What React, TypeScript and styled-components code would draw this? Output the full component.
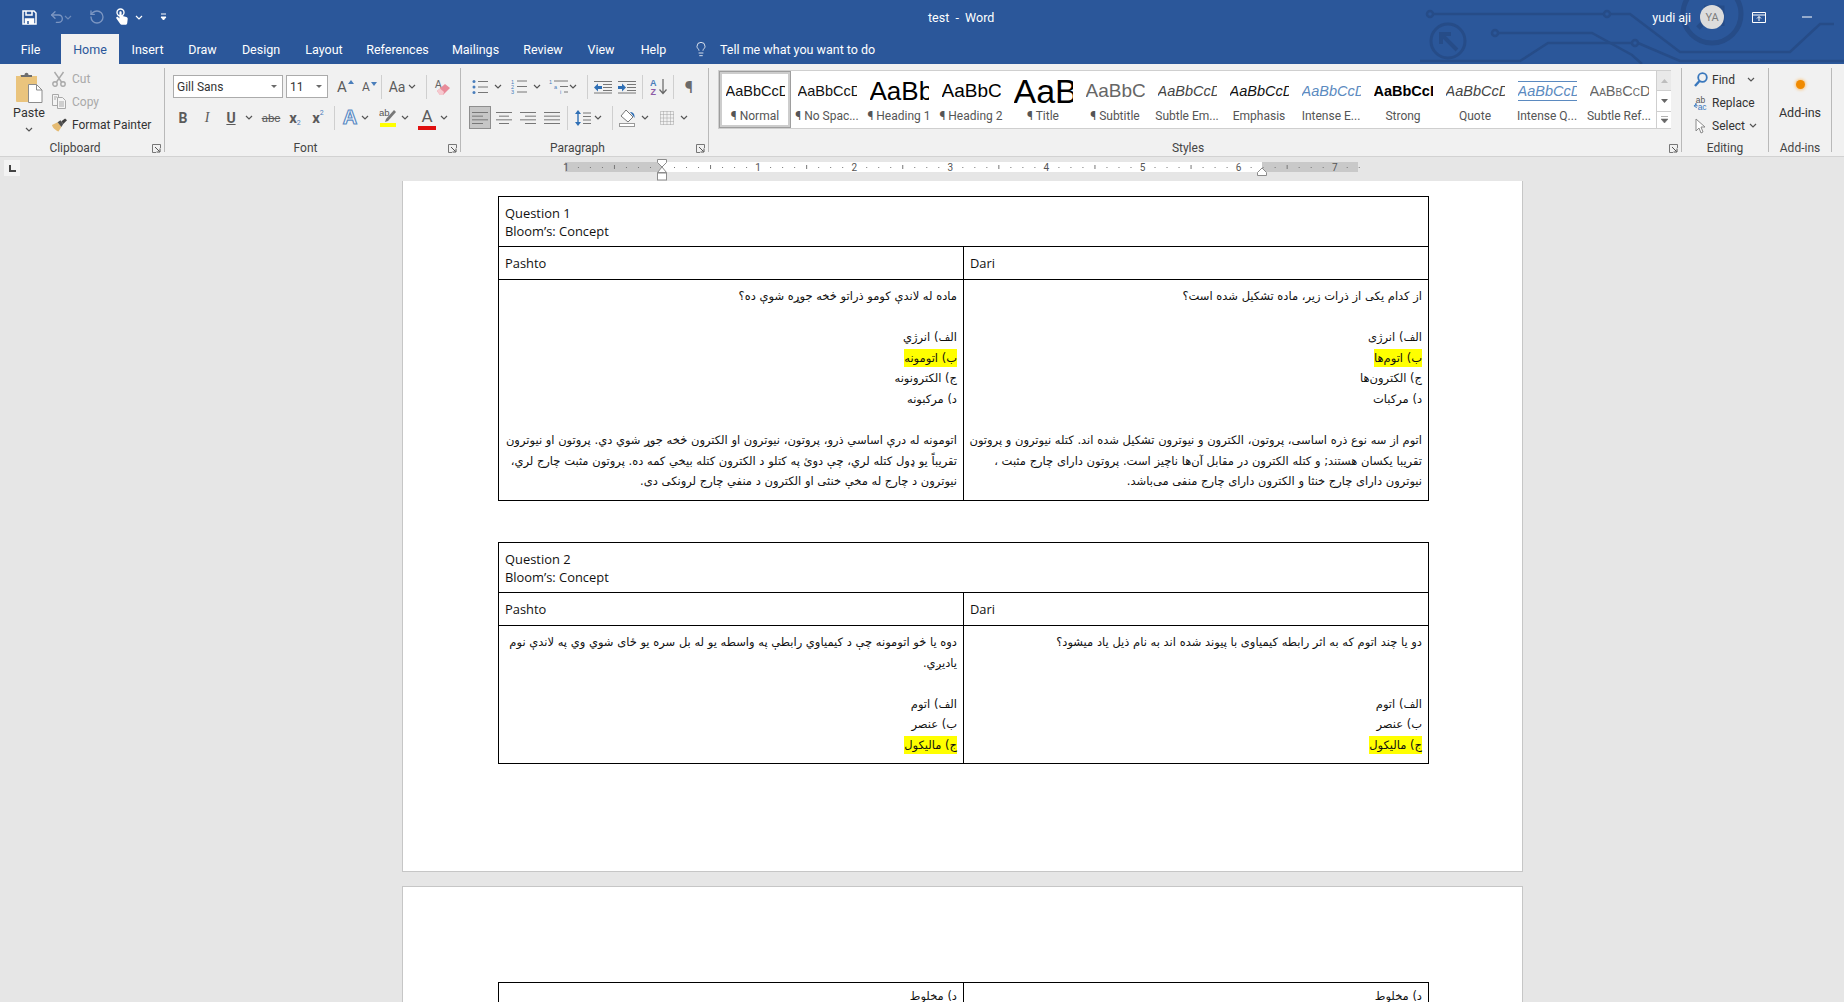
import React from "react";
import styled, { createGlobalStyle } from "styled-components";
import { Lightbulb, RotateCcw, Undo2 } from "lucide-react";

const GlobalStyle = createGlobalStyle`
  html, body { margin: 0; padding: 0; height: 100%; overflow: hidden; background: #e6e6e6; }
  body { font-family: Roboto, "Liberation Sans", sans-serif; font-size: 12px; color: #333; }
`;

const Window = styled.div`
  width: 1844px;
  height: 1002px;
  display: flex;
  flex-direction: column;
  overflow: hidden;
`;

/* ---------- blue header ---------- */
const Header = styled.header`
  position: relative;
  height: 64px;
  flex: none;
  background: #2b579a;
  color: #fff;
  overflow: hidden;
`;

const Circuit = styled.svg`
  position: absolute;
  left: 1420px;
  top: 0;
`;

const TitleRow = styled.div`
  position: relative;
  height: 34px;
  display: flex;
  align-items: center;
`;

const TitleText = styled.span<{ $ml: number }>`
  margin-left: ${(p) => p.$ml}px;
  font-size: 12.5px;
  white-space: pre;
`;

const Avatar = styled.div`
  width: 24px;
  height: 24px;
  margin-left: 9px;
  border-radius: 50%;
  background: #dcdcdc;
  color: #7d7d7d;
  font-size: 11px;
  display: flex;
  align-items: center;
  justify-content: center;
`;

const Tabs = styled.nav`
  position: relative;
  height: 30px;
  display: flex;
`;

const Tab = styled.div<{ $w: number; $active?: boolean }>`
  width: ${(p) => p.$w}px;
  display: flex;
  align-items: center;
  justify-content: center;
  font-size: 12.5px;
  background: ${(p) => (p.$active ? "#f1f1f1" : "transparent")};
  color: ${(p) => (p.$active ? "#2b579a" : "#fff")};
`;

const TellMe = styled.div`
  margin-left: 13px;
  display: flex;
  align-items: center;
  gap: 11px;
  font-size: 12.5px;
`;

/* ---------- ribbon ---------- */
const Ribbon = styled.section`
  height: 92px;
  flex: none;
  display: flex;
  background: #f1f1f1;
  border-bottom: 1px solid #d2d2d2;
  box-sizing: content-box;
`;

const Group = styled.div<{ $w: number }>`
  position: relative;
  width: ${(p) => p.$w}px;
  height: 84px;
  margin-top: 4px;
  flex: none;
  display: flex;
  flex-direction: column;
  box-sizing: border-box;
  border-right: 1px solid #b9b9b9;
`;

const GroupBody = styled.div`
  flex: 1;
  min-height: 0;
  display: flex;
`;

const GroupLabel = styled.div<{ $launcher?: boolean }>`
  position: relative;
  height: 16px;
  margin-bottom: -4px;
  padding-right: ${(p) => (p.$launcher ? 14 : 0)}px;
  text-align: center;
  font-size: 12px;
  line-height: 16px;
  color: #444;
`;

const Launcher = styled.svg`
  position: absolute;
  right: 3px;
  top: 4px;
`;

const ToolStack = styled.div`
  padding-top: 3px;
  display: flex;
  flex-direction: column;
`;

const ToolRow = styled.div`
  height: 31px;
  display: flex;
  align-items: center;
`;

const Tool = styled.div<{ $ml: number; $w: number; $size?: number; $weight?: number; $color?: string; $italic?: boolean; $serif?: boolean }>`
  position: relative;
  flex: none;
  margin-left: ${(p) => p.$ml}px;
  width: ${(p) => p.$w}px;
  display: flex;
  align-items: center;
  justify-content: center;
  font-size: ${(p) => p.$size ?? 13}px;
  font-weight: ${(p) => p.$weight ?? 400};
  font-style: ${(p) => (p.$italic ? "italic" : "normal")};
  font-family: ${(p) => (p.$serif ? '"Liberation Serif", serif' : "inherit")};
  color: ${(p) => p.$color ?? "#5b5b5b"};
`;

const ToolSep = styled.div<{ $ml: number }>`
  flex: none;
  margin-left: ${(p) => p.$ml}px;
  width: 1px;
  height: 24px;
  background: #cfcfcf;
`;

const Select = styled.div<{ $ml: number; $w: number }>`
  flex: none;
  margin-left: ${(p) => p.$ml}px;
  width: ${(p) => p.$w}px;
  height: 23px;
  box-sizing: border-box;
  padding: 0 3px;
  display: flex;
  align-items: center;
  justify-content: space-between;
  background: #fff;
  border: 1px solid #ababab;
  font-size: 12px;
  color: #333;
`;

const SelectCaret = styled.span`
  width: 0;
  height: 0;
  margin-right: 2px;
  border-left: 3px solid transparent;
  border-right: 3px solid transparent;
  border-top: 3px solid #6a6a6a;
`;

const ActiveAlign = styled.div<{ $ml: number }>`
  flex: none;
  margin-left: ${(p) => p.$ml}px;
  width: 22px;
  height: 23px;
  box-sizing: border-box;
  border: 1px solid #8e8e8e;
  background: #c6c6c6;
  display: flex;
  align-items: center;
  justify-content: center;
`;

const ColorBar = styled.span<{ $color: string }>`
  position: absolute;
  left: 0;
  right: 0;
  bottom: -1px;
  height: 4px;
  background: ${(p) => p.$color};
`;

const UnderA = styled.span`
  position: relative;
  display: block;
  width: 100%;
  height: 22px;
  text-align: center;
  line-height: 18px;
`;

const OutlineA = styled.span`
  font-family: "Liberation Sans", sans-serif;
  font-size: 20px;
  font-weight: 700;
  color: #fff;
  -webkit-text-stroke: 1.2px #5d8cc4;
`;

const SubScript = styled.span<{ $up?: boolean }>`
  font-size: 7px;
  font-weight: 400;
  color: #4a7ebb;
  align-self: ${(p) => (p.$up ? "flex-start" : "flex-end")};
`;

/* clipboard */
const PasteBlock = styled.div`
  width: 58px;
  margin-right: -7px;
  flex: none;
  display: flex;
  flex-direction: column;
  align-items: center;
  padding-top: 4px;
  font-size: 12.5px;
  color: #333;
`;

const PasteLabel = styled.div`
  margin-top: 2px;
`;

const PasteChev = styled.div`
  margin-top: 7px;
  line-height: 0;
`;

const SmallStack = styled.div`
  margin-top: -1px;
  display: flex;
  flex-direction: column;
`;

const SmallRow = styled.div<{ $disabled?: boolean }>`
  height: 23px;
  display: flex;
  align-items: center;
  gap: 5px;
  font-size: 12px;
  white-space: nowrap;
  color: ${(p) => (p.$disabled ? "#a9a9a9" : "#333")};
`;

const SmallIcon = styled.div`
  width: 16px;
  display: flex;
  justify-content: center;
  flex: none;
`;

/* styles gallery */
const Gallery = styled.div`
  margin: 2px 0 0 9px;
  width: 953px;
  height: 59px;
  box-sizing: border-box;
  display: flex;
  background: #fff;
  border: 1px solid #cfcfcf;
`;

const StyleItem = styled.div<{ $selected?: boolean }>`
  width: 72px;
  flex: none;
  box-sizing: border-box;
  padding-top: 2px;
  display: flex;
  flex-direction: column;
  align-items: center;
  overflow: hidden;
  border: ${(p) => (p.$selected ? "1px solid #9e9e9e" : "1px solid transparent")};
  box-shadow: ${(p) => (p.$selected ? "inset 0 0 0 2px #cdcdcd" : "none")};
`;

const StylePreview = styled.div<{ $size: number; $color: string; $italic?: boolean; $bold?: boolean; $lines?: boolean; $caps?: boolean }>`
  width: 59px;
  height: 34px;
  flex: none;
  overflow: hidden;
  display: flex;
  align-items: center;
  white-space: nowrap;
  font-family: "Liberation Sans", sans-serif;
  font-size: ${(p) => p.$size}px;
  color: ${(p) => p.$color};
  font-style: ${(p) => (p.$italic ? "italic" : "normal")};
  font-weight: ${(p) => (p.$bold ? 700 : 400)};
  font-variant: ${(p) => (p.$caps ? "small-caps" : "normal")};
  justify-content: flex-start;
  & > span {
    line-height: 18px;
    border-top: ${(p) => (p.$lines ? "1px solid #5b8ac0" : "none")};
    border-bottom: ${(p) => (p.$lines ? "1px solid #5b8ac0" : "none")};
  }
`;

const StyleName = styled.div`
  font-size: 12px;
  line-height: 16px;
  color: #555;
  white-space: nowrap;
`;

const GalleryScroll = styled.div`
  margin-left: 1px;
  width: 14px;
  flex: none;
  display: flex;
  flex-direction: column;
  border-left: 1px solid #cfcfcf;
`;

const ScrollButton = styled.div<{ $h: number; $off?: boolean }>`
  height: ${(p) => p.$h}px;
  display: flex;
  align-items: center;
  justify-content: center;
  background: ${(p) => (p.$off ? "#e9e9e9" : "#fff")};
  border-bottom: 1px solid #cfcfcf;
  &:last-child { border-bottom: none; }
`;

const EditStack = styled.div`
  padding: 0 0 0 11px;
  display: flex;
  flex-direction: column;
`;

const EditRow = styled.div`
  height: 23px;
  display: flex;
  align-items: center;
  gap: 4px;
  font-size: 12px;
  color: #333;
`;

const EditIcon = styled.div`
  width: 15px;
  display: flex;
  justify-content: center;
`;

const EditChev = styled.div<{ $ml: number }>`
  margin-left: ${(p) => p.$ml}px;
  line-height: 0;
`;

const AddIn = styled.div`
  flex: 1;
  display: flex;
  flex-direction: column;
  align-items: center;
  padding-top: 12px;
  font-size: 12.5px;
  color: #333;
`;

const AddInDot = styled.div`
  width: 9px;
  height: 9px;
  border-radius: 50%;
  background: #f08a00;
  box-shadow: 0 0 3px 1px #f9c784;
  margin-bottom: 16px;
`;

/* ---------- ruler ---------- */
const RulerBar = styled.div`
  height: 24px;
  flex: none;
  display: flex;
  background: #e6e6e6;
`;

const TabStopBox = styled.div`
  margin: 3px 0 0 4px;
  width: 16px;
  height: 16px;
  background: #f3f3f3;
  display: flex;
  align-items: center;
  justify-content: center;
`;

const RulerSvg = styled.svg`
  margin-left: 545px;
  overflow: visible;
`;

/* ---------- document ---------- */
const DocArea = styled.main`
  flex: 1;
  min-height: 0;
  overflow: hidden;
  padding-left: 402px;
  background: #e6e6e6;
`;

const Page = styled.div<{ $top: number; $first?: boolean }>`
  width: 1121px;
  box-sizing: border-box;
  padding: ${(p) => p.$top}px 95px 0;
  background: #fff;
  border: 1px solid #c6c6c6;
  border-top: ${(p) => (p.$first ? "none" : "1px solid #c6c6c6")};
  height: ${(p) => (p.$first ? "691px" : "auto")};
  margin-bottom: 14px;
`;

const QuestionTable = styled.table<{ $mb?: number }>`
  width: 931px;
  table-layout: fixed;
  border-collapse: collapse;
  margin-bottom: ${(p) => p.$mb ?? 0}px;
  font-family: "Open Sans", "Noto Sans", sans-serif;
  font-size: 12.9px;
  color: #111;
  td {
    border: 1px solid #000;
    padding: 0 6px;
    vertical-align: top;
  }
`;

const HeadCell = styled.td`
  line-height: 18px;
  && { padding-top: 7px; padding-bottom: 6px; }
`;

const LangCell = styled.td`
  line-height: 18px;
  && { padding-top: 7px; padding-bottom: 7px; }
`;

const BodyCell = styled.td<{ $pb?: number }>`
  && { padding-top: 6px; padding-bottom: ${(p) => p.$pb ?? 8}px; }
  direction: rtl;
  text-align: right;
  font-family: "DejaVu Sans", sans-serif;
  font-size: 11.5px;
`;

const Line = styled.div`
  height: 20.6px;
  line-height: 20.6px;
  white-space: nowrap;
`;

const Mark = styled.span`
  background: #ffff00;
  padding: 2px 0;
`;

/* ---------- icons ---------- */
const Chev = ({ color = "#555" }: { color?: string }) => (
  <svg width="8" height="5" viewBox="0 0 8 5" fill="none">
    <path d="M1 1l3 3 3-3" stroke={color} strokeWidth="1.2" />
  </svg>
);

const LauncherIcon = () => (
  <Launcher width="9" height="9" viewBox="0 0 9 9" fill="none">
    <path d="M8.5 4V.5H.5v8H4" stroke="#777" />
    <path d="M3 3l4.5 4.5M8 4.5V8H4.5" stroke="#555" />
  </Launcher>
);

const Lines = ({ rows, w = 16, color = "#777" }: { rows: [number, number][]; w?: number; color?: string }) => (
  <svg width={w} height="14" viewBox={`0 0 ${w} 14`} fill="none" stroke={color}>
    {rows.map(([x, len], i) => (
      <path key={i} d={`M${x} ${1.5 + i * (rows.length > 1 ? 11 / (rows.length - 1) : 0)}h${len}`} />
    ))}
  </svg>
);

const SaveIcon = () => (
  <svg width="15" height="15" viewBox="0 0 15 15" fill="none" stroke="#fff" strokeWidth="1.5">
    <path d="M1 1h11l2 2v11H1z" />
    <path d="M4 1v4h6V1" />
    <path d="M3.5 14V9h8v5" fill="#fff" />
    <path d="M6 11v3" stroke="#2b579a" />
  </svg>
);

const TouchIcon = () => (
  <svg width="14" height="18" viewBox="0 0 14 18" fill="none">
    <circle cx="5.5" cy="4.5" r="3.5" stroke="#fff" strokeWidth="1.4" />
    <path d="M4.4 4.2c0-1.4 2.2-1.4 2.2 0v3.6l4.7 1.1c1 .3 1.5 1 1.4 2l-.5 4.3c-.1.8-.8 1.5-1.6 1.5H6.7c-.6 0-1.1-.3-1.4-.8L1.4 10.600c-.7-1.200.8-2.400 1.800-1.400l1.200 1.200z" fill="#fff" />
  </svg>
);

const PasteIcon = () => (
  <svg width="29" height="31" viewBox="0 0 29 31" fill="none">
    <path d="M1 4h4v-1h12v1h5v26H2a1 1 0 0 1-1-1z" fill="#eac47d" />
    <path d="M6 5V3h3.500c0-3 4-3 4 0H17v2z" fill="#6e6e6e" />
    <path d="M13.500 12.500h8l5.500 5.500v12.500H13.500z" fill="#fff" stroke="#8c8c8c" />
    <path d="M21.500 12.500V18H27" stroke="#8c8c8c" />
  </svg>
);

const CutIcon = () => (
  <svg width="14" height="16" viewBox="0 0 14 16" fill="none" stroke="#a9a9a9" strokeWidth="1.400">
    <path d="M2.500 1l7 10M11.500 1l-7 10" />
    <circle cx="3" cy="13" r="2.200" />
    <circle cx="11" cy="13" r="2.200" />
  </svg>
);

const CopyIcon = () => (
  <svg width="14" height="15" viewBox="0 0 14 15" fill="#f4f4f4" stroke="#a9a9a9">
    <path d="M.5.500h6v11h-6z" />
    <path d="M5.500 3.500h5l3 3v8h-8z" />
    <path d="M2 3h3M2 5h2M7 8h5M7 10h5M7 12h5" />
  </svg>
);

const PainterIcon = () => (
  <svg width="17" height="14" viewBox="0 0 17 14" fill="none">
    <path d="M1 7l6-3 4 5-3 5C6 13 2 11 1 7z" fill="#e5bb72" />
    <path d="M7 4l3-2 3 4-2 3z" fill="#505050" />
    <path d="M11 3l4-3 2 2-4 4z" fill="#404040" />
  </svg>
);

const GrowIcon = ({ up }: { up: boolean }) => (
  <svg width="6" height="4" viewBox="0 0 6 4" style={{ position: "absolute", right: -3, top: 2 }}>
    <path d={up ? "M3 0l3 4H0z" : "M3 4L0 0h6z"} fill="#4a7ebb" />
  </svg>
);

const EraserIcon = () => (
  <svg width="18" height="18" viewBox="0 0 18 18" fill="none">
    <text x="1" y="10" fontFamily="Liberation Sans" fontSize="10" fill="#666">A</text>
    <path d="M3 13l8-7 5 4-7 7H6z" fill="#e88b9a" />
    <path d="M3 13l3-2.500 4 3.500-1 3H6z" fill="#f6c9cf" />
  </svg>
);

const HighlightIcon = () => (
  <svg width="18" height="22" viewBox="0 0 18 22" fill="none">
    <text x="0" y="9" fontFamily="Liberation Sans" fontSize="9.500" fill="#555">ab</text>
    <path d="M7 12l8-9 2 2-8 9-3 1z" fill="#777" />
    <rect x="1" y="16" width="16" height="4" fill="#ffff00" />
  </svg>
);

const BulletsIcon = () => (
  <svg width="16" height="14" viewBox="0 0 16 14" fill="none">
    {[1.5, 7, 12.500].map((y) => <circle key={y} cx="2" cy={y} r="1.500" fill="#4a7ebb" />)}
    <path d="M6 1.500h10M6 7h10M6 12.500h10" stroke="#777" />
  </svg>
);

const NumberingIcon = () => (
  <svg width="16" height="15" viewBox="0 0 16 15" fill="none">
    {["1", "2", "3"].map((n, i) => (
      <text key={n} x="0" y={4.500 + i * 5} fontFamily="Liberation Sans" fontSize="5.500" fill="#4a7ebb">{n}</text>
    ))}
    <path d="M6 2h10M6 7.500h10M6 13h10" stroke="#777" />
  </svg>
);

const MultilevelIcon = () => (
  <svg width="20" height="15" viewBox="0 0 20 15" fill="none">
    <text x="0" y="5" fontFamily="Liberation Sans" fontSize="5.500" fill="#4a7ebb">1</text>
    <text x="5" y="10" fontFamily="Liberation Sans" fontSize="5.500" fill="#4a7ebb">a</text>
    <text x="11" y="15" fontFamily="Liberation Sans" fontSize="5.500" fill="#4a7ebb">i</text>
    <path d="M5 2h14M11 7.500h8M15 13h4" stroke="#777" />
  </svg>
);

const IndentIcon = ({ flip }: { flip?: boolean }) => (
  <svg width="18" height="14" viewBox="0 0 18 14" fill="none">
    <path d="M0 1.500h18M9 4.500h9M9 7.500h9M9 10.500h9M0 13h18" stroke="#777" />
    <path d={flip ? "M0 6h4V3.500L8 7.500l-4 4V9H0z" : "M8 6H4V3.500l-4 4 4 4V9h4z"} fill="#2f6fb5" />
  </svg>
);

const SortIcon = () => (
  <svg width="18" height="17" viewBox="0 0 18 17" fill="none">
    <text x="0" y="7.500" fontFamily="Liberation Sans" fontSize="9" fontWeight="700" fill="#4a7ebb">A</text>
    <text x="0.500" y="16.500" fontFamily="Liberation Sans" fontSize="9" fontWeight="700" fill="#8e5ba6">Z</text>
    <path d="M13 1v14M9.500 11.500l3.500 4 3.500-4" stroke="#666" strokeWidth="1.200" />
  </svg>
);

const LineSpacingIcon = () => (
  <svg width="16" height="16" viewBox="0 0 16 16" fill="none">
    <path d="M3 3v10" stroke="#2f6fb5" strokeWidth="1.400" />
    <path d="M3 0l3 4H0zM3 16L0 12h6z" fill="#2f6fb5" />
    <path d="M8 3h8M8 6.500h8M8 10h8M8 13.500h8" stroke="#777" />
  </svg>
);

const ShadingIcon = () => (
  <svg width="18" height="18" viewBox="0 0 18 18" fill="none">
    <path d="M7 1l7 7-5 5-7-6z" fill="#fff" stroke="#777" />
    <path d="M11 3c3 0 5 2 4.500 6l-2-3z" fill="#2f6fb5" />
    <rect x="0.500" y="14.500" width="15" height="3" fill="#fff" stroke="#999" />
  </svg>
);

const BordersIcon = () => (
  <svg width="14" height="14" viewBox="0 0 14 14" fill="none" stroke="#a3a3a3" strokeDasharray="1 1">
    <path d="M.5.500h13v13H.5zM7 .5v13M.5 7h13M3.500.5v13M10.500.5v13M.5 3.500h13M.5 10.500h13" />
  </svg>
);

const FindIcon = () => (
  <svg width="14" height="15" viewBox="0 0 14 15" fill="none" stroke="#3a78bd">
    <circle cx="8.500" cy="5.500" r="4.300" strokeWidth="1.800" />
    <path d="M5.500 9L1 14" strokeWidth="2.400" />
  </svg>
);

const ReplaceIcon = () => (
  <svg width="16" height="16" viewBox="0 0 16 16" fill="none">
    <text x="3" y="7.500" fontFamily="Liberation Sans" fontSize="9" fill="#555">ab</text>
    <text x="5" y="15.500" fontFamily="Liberation Sans" fontSize="9" fill="#3a78bd">ac</text>
    <path d="M3 8v3h2M4 13l-3-2 3-2" stroke="#3a78bd" />
  </svg>
);

const SelectIcon = () => (
  <svg width="11" height="16" viewBox="0 0 11 16" fill="#fdfdfd" stroke="#8a8a8a">
    <path d="M1 1v12l3-3 2 5 2-1-2-5h4z" />
  </svg>
);

/* ---------- data ---------- */
const tabs = [
  { label: "File", w: 61 },
  { label: "Home", w: 58, active: true },
  { label: "Insert", w: 57 },
  { label: "Draw", w: 53 },
  { label: "Design", w: 64 },
  { label: "Layout", w: 62 },
  { label: "References", w: 85 },
  { label: "Mailings", w: 71 },
  { label: "Review", w: 64 },
  { label: "View", w: 52 },
  { label: "Help", w: 53 },
];

const galleryStyles = [
  { name: "¶ Normal", preview: "AaBbCcDd", size: 14.5, color: "#111", selected: true },
  { name: "¶ No Spac...", preview: "AaBbCcDd", size: 14.5, color: "#111" },
  { name: "¶ Heading 1", preview: "AaBb", size: 26, color: "#000" },
  { name: "¶ Heading 2", preview: "AaBbC", size: 19, color: "#000" },
  { name: "¶ Title", preview: "AaB", size: 34, color: "#000" },
  { name: "¶ Subtitle", preview: "AaBbC", size: 19, color: "#666" },
  { name: "Subtle Em...", preview: "AaBbCcDd", size: 14.5, color: "#444", italic: true },
  { name: "Emphasis", preview: "AaBbCcDd", size: 14.5, color: "#111", italic: true },
  { name: "Intense E...", preview: "AaBbCcDd", size: 14.5, color: "#5b8ac0", italic: true },
  { name: "Strong", preview: "AaBbCcDd", size: 14.5, color: "#000", bold: true },
  { name: "Quote", preview: "AaBbCcDd", size: 14.5, color: "#444", italic: true },
  { name: "Intense Q...", preview: "AaBbCcDd", size: 14.5, color: "#5b8ac0", italic: true, lines: true },
  { name: "Subtle Ref...", preview: "AaBbCcDd", size: 14.5, color: "#666", caps: true },
];

const ALEFT: [number, number][] = [[0, 16], [0, 11], [0, 16], [0, 11]];
const ACENTER: [number, number][] = [[0, 16], [3, 10], [0, 16], [3, 10]];
const ARIGHT: [number, number][] = [[0, 16], [5, 11], [0, 16], [5, 11]];
const AJUST: [number, number][] = [[0, 16], [0, 16], [0, 16], [0, 16]];

const rulerTicks = Array.from({ length: 66 }, (_, i) => i - 7);

const Ruler = () => (
  <RulerSvg width="793" height="24" viewBox="0 0 793 24">
    <rect x="0" y="5" width="97" height="10" fill="#c9c9c9" />
    <rect x="97" y="5" width="600" height="10" fill="#fff" />
    <rect x="697" y="5" width="96" height="10" fill="#c9c9c9" />
    <text x="1" y="14" textAnchor="middle" fontFamily="Roboto" fontSize="10" fill="#555">1</text>
    {rulerTicks.map((t) => {
      const x = 97 + (t * 96.1) / 8;
      if (t % 8 === 0) {
        if (t === 0) return null;
        return (
          <text key={t} x={x} y="14" textAnchor="middle" fontFamily="Roboto" fontSize="10" fill="#555">
            {Math.abs(t / 8)}
          </text>
        );
      }
      return t % 4 === 0
        ? <rect key={t} x={x} y="8" width="1" height="4" fill="#777" />
        : <rect key={t} x={x} y="10" width="1" height="1" fill="#777" />;
    })}
    <path d="M92.500 2.500h9v3L97 10l-4.500-4.500z" fill="#fff" stroke="#8c8c8c" />
    <path d="M97 10l4.500 5.500h-9z" fill="#fff" stroke="#8c8c8c" />
    <rect x="92.500" y="16" width="9" height="7" fill="#fff" stroke="#8c8c8c" />
    <path d="M692.500 18.500v-3L697 11l4.500 4.500v3z" fill="#fff" stroke="#8c8c8c" />
  </RulerSvg>
);

const BlockRow = ({ lines, mark }: { lines: string[]; mark?: number }) => (
  <>
    {lines.map((text, i) => (
      <Line key={i}>{i === mark ? <Mark>{text}</Mark> : text || "\u00a0"}</Line>
    ))}
  </>
);

const q1Pashto = [
  "ماده له لاندې کومو ذراتو څخه جوړه شوې ده؟",
  "",
  "الف) انرژي",
  "ب) اتومونه",
  "ج) الکترونونه",
  "د) مرکبونه",
  "",
  "اتومونه له درې اساسي ذرو، پروتون، نیوترون او الکترون څخه جوړ شوي دي. پروتون او نیوترون",
  "تقریباً یو ډول کتله لري، چې دوئ په کتلو د الکترون کتله بیخي کمه ده. پروتون مثبت چارج لري،",
  "نیوترون د چارج له مخې خنثی او الکترون د منفي چارج لرونکی دی.",
];

const q1Dari = [
  "از کدام یکی از ذرات زیر، ماده  تشکیل شده است؟",
  "",
  "الف) انرژی",
  "ب) اتوم‌ها",
  "ج) الکترون‌ها",
  "د) مرکبات",
  "",
  "اتوم از سه نوع ذره اساسی، پروتون، الکترون و نیوترون تشکیل شده اند. کتله نیوترون و پروتون",
  "تقریبا یکسان هستند; و کتله الکترون در مقابل آن‌ها ناچیز است. پروتون  دارای چارج مثبت ،",
  "نیوترون  دارای چارج خنثا و الکترون دارای چارج منفی می‌باشد.",
];

const q2Pashto = [
  "دوه یا څو اتومونه چې د کیمیاوي رابطې په واسطه یو له بل سره یو ځای شوي وي په لاندې نوم",
  "یادیږي.",
  "",
  "الف) اتوم",
  "ب) عنصر",
  "ج) مالیکول",
];

const q2Dari = [
  "دو یا چند اتوم  که به اثر رابطه کیمیاوی با پیوند شده اند به نام ذیل یاد میشود؟",
  "",
  "",
  "الف) اتوم",
  "ب) عنصر",
  "ج) مالیکول",
];

const Question = ({ n, pashto, dari, mark, mb, pb }: { n: number; pashto: string[]; dari: string[]; mark: number; mb: number; pb?: number }) => (
  <QuestionTable $mb={mb}>
    <tbody>
      <tr>
        <HeadCell colSpan={2}>
          Question {n}
          <br />
          Bloom’s: Concept
        </HeadCell>
      </tr>
      <tr>
        <LangCell>Pashto</LangCell>
        <LangCell>Dari</LangCell>
      </tr>
      <tr>
        <BodyCell $pb={pb}><BlockRow lines={pashto} mark={mark} /></BodyCell>
        <BodyCell $pb={pb}><BlockRow lines={dari} mark={mark} /></BodyCell>
      </tr>
    </tbody>
  </QuestionTable>
);

export default function App() {
  return (
    <Window>
      <GlobalStyle />
      <Header>
        <Circuit width="424" height="64" viewBox="0 0 424 64" fill="none" stroke="#264c88" strokeWidth="2.500">
          <circle cx="10" cy="14" r="3" />
          <path d="M13 14h171M190 14h20l50 38h110l30-28h14" />
          <circle cx="187" cy="14" r="3" />
          <circle cx="75" cy="33" r="3" />
          <path d="M78 33h94l40 22 10 9" />
          <circle cx="215" cy="43" r="3" />
          <path d="M0 61h100l28-18h84M218 43l42 18h164" />
          <circle cx="28" cy="41" r="17" strokeWidth="3" />
          <path d="M37 50L23 36M21 44v-10h10" strokeWidth="4" />
          <circle cx="292" cy="14" r="29" strokeWidth="5" />
          <path d="M278 28l22-22M284 8h18v18" strokeWidth="5" />
        </Circuit>
        <TitleRow>
          <Tool $ml={22} $w={15}><SaveIcon /></Tool>
          <Tool $ml={12} $w={16}><Undo2 size={16} color="#7c96c2" strokeWidth={2} /></Tool>
          <Tool $ml={-1} $w={8} ><Chev color="#6d8ab9" /></Tool>
          <Tool $ml={17} $w={16}><RotateCcw size={16} color="#7c96c2" strokeWidth={2} /></Tool>
          <Tool $ml={10} $w={14}><TouchIcon /></Tool>
          <Tool $ml={6} $w={8}><Chev color="#fff" /></Tool>
          <Tool $ml={16} $w={8}>
            <svg width="7" height="8" viewBox="0 0 7 8"><path d="M1 1h5M1 4l2.500 3L6 4z" stroke="#fff" fill="#fff" /></svg>
          </Tool>
          <TitleText $ml={761}>test  -  Word</TitleText>
          <TitleText $ml={658}>yudi aji</TitleText>
          <Avatar>YA</Avatar>
          <Tool $ml={28} $w={14}>
            <svg width="14" height="11" viewBox="0 0 14 11" fill="none" stroke="#fff">
              <path d="M.5.500h13v10H.5zM.5 3h13M7 9V4.500M5 6.500l2-2 2 2" />
            </svg>
          </Tool>
          <Tool $ml={36} $w={10}>
            <svg width="10" height="2" viewBox="0 0 10 2"><path d="M0 1h10" stroke="#fff" /></svg>
          </Tool>
        </TitleRow>
        <Tabs>
          {tabs.map((t) => (
            <Tab key={t.label} $w={t.w} $active={t.active}>{t.label}</Tab>
          ))}
          <TellMe>
            <Lightbulb size={16} strokeWidth={1.2} color="#fff" />
            Tell me what you want to do
          </TellMe>
        </Tabs>
      </Header>

      <Ribbon>
        <Group $w={165}>
          <GroupBody>
            <PasteBlock>
              <PasteIcon />
              <PasteLabel>Paste</PasteLabel>
              <PasteChev><Chev /></PasteChev>
            </PasteBlock>
            <SmallStack>
              <SmallRow $disabled><SmallIcon><CutIcon /></SmallIcon>Cut</SmallRow>
              <SmallRow $disabled><SmallIcon><CopyIcon /></SmallIcon>Copy</SmallRow>
              <SmallRow><SmallIcon><PainterIcon /></SmallIcon>Format Painter</SmallRow>
            </SmallStack>
          </GroupBody>
          <GroupLabel $launcher>Clipboard<LauncherIcon /></GroupLabel>
        </Group>

        <Group $w={296}>
          <GroupBody>
            <ToolStack>
              <ToolRow>
                <Select $ml={8} $w={110}>Gill Sans<SelectCaret /></Select>
                <Select $ml={3} $w={42}>11<SelectCaret /></Select>
                <Tool $ml={5} $w={18} $size={15}>A<GrowIcon up /></Tool>
                <Tool $ml={7} $w={16} $size={12}>A<GrowIcon up={false} /></Tool>
                <ToolSep $ml={7} />
                <Tool $ml={5} $w={20} $size={14}>Aa</Tool>
                <Tool $ml={1} $w={8}><Chev /></Tool>
                <ToolSep $ml={10} />
                <Tool $ml={7} $w={18}><EraserIcon /></Tool>
              </ToolRow>
              <ToolRow>
                <Tool $ml={10} $w={16} $size={14} $weight={700}>B</Tool>
                <Tool $ml={8} $w={16} $size={14} $italic $serif>I</Tool>
                <Tool $ml={8} $w={16} $size={14} $weight={700}><u>U</u></Tool>
                <Tool $ml={6} $w={8}><Chev /></Tool>
                <Tool $ml={7} $w={22} $size={11.5}><s>abc</s></Tool>
                <Tool $ml={5} $w={16} $size={15} $weight={700}>x<SubScript>2</SubScript></Tool>
                <Tool $ml={7} $w={16} $size={15} $weight={700}>x<SubScript $up>2</SubScript></Tool>
                <ToolSep $ml={8} />
                <Tool $ml={6} $w={18}><OutlineA>A</OutlineA></Tool>
                <Tool $ml={2} $w={8}><Chev /></Tool>
                <Tool $ml={10} $w={18}><HighlightIcon /></Tool>
                <Tool $ml={4} $w={8}><Chev /></Tool>
                <Tool $ml={9} $w={18} $size={17}><UnderA>A<ColorBar $color="#e01010" /></UnderA></Tool>
                <Tool $ml={4} $w={8}><Chev /></Tool>
              </ToolRow>
            </ToolStack>
          </GroupBody>
          <GroupLabel $launcher>Font<LauncherIcon /></GroupLabel>
        </Group>

        <Group $w={248}>
          <GroupBody>
            <ToolStack>
              <ToolRow>
                <Tool $ml={11} $w={16}><BulletsIcon /></Tool>
                <Tool $ml={6} $w={8}><Chev /></Tool>
                <Tool $ml={9} $w={16}><NumberingIcon /></Tool>
                <Tool $ml={6} $w={8}><Chev /></Tool>
                <Tool $ml={8} $w={20}><MultilevelIcon /></Tool>
                <Tool $ml={0} $w={8}><Chev /></Tool>
                <ToolSep $ml={10} />
                <Tool $ml={6} $w={18}><IndentIcon /></Tool>
                <Tool $ml={6} $w={18}><IndentIcon flip /></Tool>
                <ToolSep $ml={6} />
                <Tool $ml={7} $w={18}><SortIcon /></Tool>
                <ToolSep $ml={5} />
                <Tool $ml={8} $w={14} $size={17} $color="#6a6a6a">¶</Tool>
              </ToolRow>
              <ToolRow>
                <ActiveAlign $ml={8}><Lines rows={ALEFT} /></ActiveAlign>
                <Tool $ml={5} $w={16}><Lines rows={ACENTER} /></Tool>
                <Tool $ml={8} $w={16}><Lines rows={ARIGHT} /></Tool>
                <Tool $ml={8} $w={16}><Lines rows={AJUST} /></Tool>
                <ToolSep $ml={7} />
                <Tool $ml={6} $w={18}><LineSpacingIcon /></Tool>
                <Tool $ml={2} $w={8}><Chev /></Tool>
                <ToolSep $ml={10} />
                <Tool $ml={6} $w={18}><ShadingIcon /></Tool>
                <Tool $ml={4} $w={8}><Chev /></Tool>
                <Tool $ml={10} $w={16}><BordersIcon /></Tool>
                <Tool $ml={5} $w={8}><Chev /></Tool>
              </ToolRow>
            </ToolStack>
          </GroupBody>
          <GroupLabel $launcher>Paragraph<LauncherIcon /></GroupLabel>
        </Group>

        <Group $w={973}>
          <GroupBody>
            <Gallery>
              {galleryStyles.map((s) => (
                <StyleItem key={s.name} $selected={s.selected}>
                  <StylePreview $size={s.size} $color={s.color} $italic={s.italic} $bold={s.bold} $lines={s.lines} $caps={s.caps}>
                    <span>{s.preview}</span>
                  </StylePreview>
                  <StyleName>{s.name}</StyleName>
                </StyleItem>
              ))}
              <GalleryScroll>
                <ScrollButton $h={20} $off>
                  <svg width="7" height="4" viewBox="0 0 7 4"><path d="M3.500 0L7 4H0z" fill="#bdbdbd" /></svg>
                </ScrollButton>
                <ScrollButton $h={20}>
                  <svg width="7" height="4" viewBox="0 0 7 4"><path d="M3.500 4L0 0h7z" fill="#666" /></svg>
                </ScrollButton>
                <ScrollButton $h={17}>
                  <svg width="7" height="7" viewBox="0 0 7 7"><path d="M0 .5h7M3.500 7L0 3h7z" stroke="#666" strokeWidth=".5" fill="#666" /></svg>
                </ScrollButton>
              </GalleryScroll>
            </Gallery>
          </GroupBody>
          <GroupLabel $launcher>Styles<LauncherIcon /></GroupLabel>
        </Group>

        <Group $w={87}>
          <GroupBody>
            <EditStack>
              <EditRow><EditIcon><FindIcon /></EditIcon>Find<EditChev $ml={8}><Chev /></EditChev></EditRow>
              <EditRow><EditIcon><ReplaceIcon /></EditIcon>Replace</EditRow>
              <EditRow><EditIcon><SelectIcon /></EditIcon>Select<EditChev $ml={0}><Chev /></EditChev></EditRow>
            </EditStack>
          </GroupBody>
          <GroupLabel>Editing</GroupLabel>
        </Group>

        <Group $w={63}>
          <GroupBody>
            <AddIn>
              <AddInDot />
              Add-ins
            </AddIn>
          </GroupBody>
          <GroupLabel>Add-ins</GroupLabel>
        </Group>
      </Ribbon>

      <RulerBar>
        <TabStopBox>
          <svg width="7" height="7" viewBox="0 0 7 7"><path d="M1 0v6h6" stroke="#444" strokeWidth="2" fill="none" /></svg>
        </TabStopBox>
        <Ruler />
      </RulerBar>

      <DocArea>
        <Page $top={15} $first>
          <Question n={1} pashto={q1Pashto} dari={q1Dari} mark={3} mb={41} />
          <Question n={2} pashto={q2Pashto} dari={q2Dari} mark={5} mb={0} pb={7} />
        </Page>
        <Page $top={95}>
          <QuestionTable>
            <tbody>
              <tr>
                <BodyCell>د) مخلوط</BodyCell>
                <BodyCell>د) مخلوط</BodyCell>
              </tr>
            </tbody>
          </QuestionTable>
        </Page>
      </DocArea>
    </Window>
  );
}
